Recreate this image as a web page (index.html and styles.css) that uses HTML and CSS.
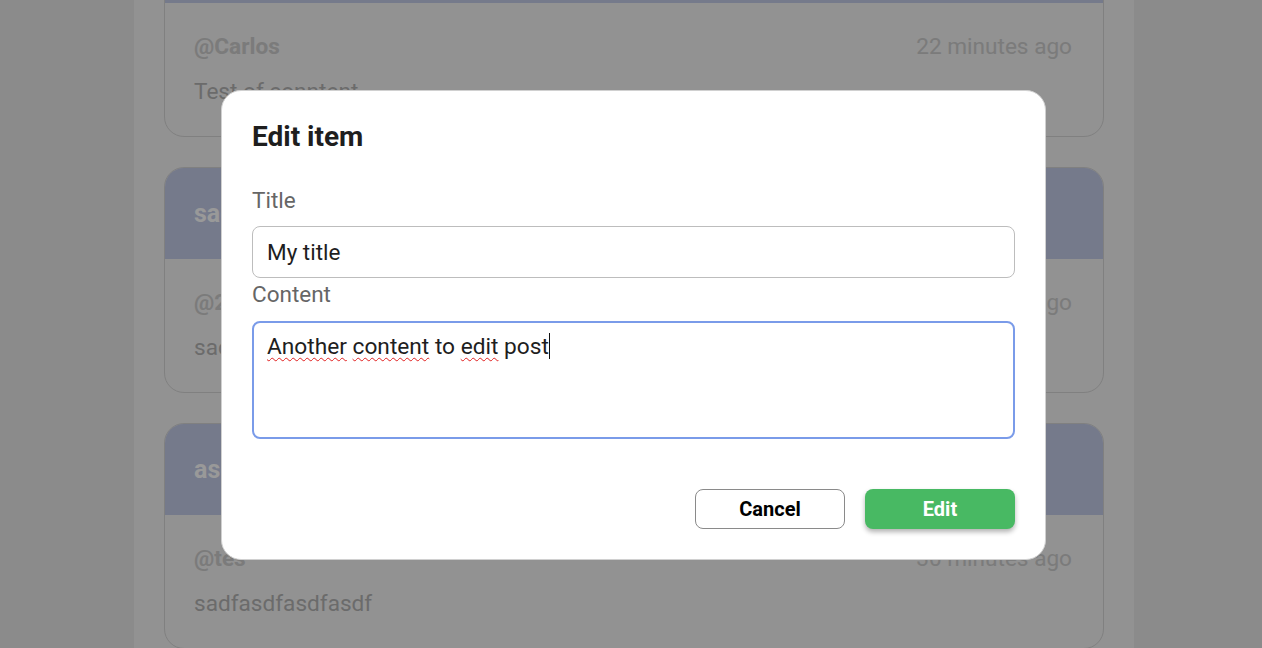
FILE: index.html
```html
<!DOCTYPE html>
<html lang="en">
<head>
<meta charset="utf-8">
<title>Edit item</title>
<link rel="stylesheet" href="styles.css">
</head>
<body>
<main class="column">
  <section class="feed">
    <article class="card">
      <header class="card-head">Test</header>
      <div class="card-body">
        <div class="meta"><span class="user">@Carlos</span><span class="time">22 minutes ago</span></div>
        <p class="text">Test of conntent</p>
      </div>
    </article>
    <article class="card">
      <header class="card-head">sadfasdf</header>
      <div class="card-body">
        <div class="meta"><span class="user">@2sadf</span><span class="time">25 minutes ago</span></div>
        <p class="text">sadfasdf</p>
      </div>
    </article>
    <article class="card">
      <header class="card-head">asdfasdf</header>
      <div class="card-body">
        <div class="meta"><span class="user">@tes</span><span class="time">30 minutes ago</span></div>
        <p class="text">sadfasdfasdfasdf</p>
      </div>
    </article>
  </section>
</main>

<div class="overlay">
  <div class="modal">
    <h2 class="modal-title">Edit item</h2>
    <label class="field-label">Title</label>
    <div class="input">My title</div>
    <label class="field-label field-label-gap">Content</label>
    <div class="textarea"><span class="typo">Another</span> <span class="typo">content</span> to <span class="typo">edit</span> post<span class="caret"></span></div>
    <div class="actions">
      <button class="btn btn-cancel">Cancel</button>
      <button class="btn btn-edit">Edit</button>
    </div>
  </div>
</div>
</body>
</html>
```

FILE: styles.css
```css
* { box-sizing: border-box; }

html, body {
  margin: 0;
  height: 100%;
  overflow: hidden;
}

body {
  background: #e8e8e8;
  font-family: Roboto, "Liberation Sans", Arial, sans-serif;
}

.column {
  width: 1000px;
  margin-left: 134px;
  min-height: 100%;
  background: #f3f3f3;
  padding: 0 30px;
}

.feed {
  display: flex;
  flex-direction: column;
  gap: 30px;
  margin-top: -89px;
}

.card {
  border: 1px solid #d6d6d6;
  border-radius: 20px;
  overflow: hidden;
}

.card-head {
  height: 91px;
  background: #c3cbe8;
  color: #ffffff;
  font-weight: 700;
  font-size: 25px;
  display: flex;
  align-items: center;
  padding-left: 29px;
}

.card-body {
  padding: 30px 31px 30px 29px;
}

.meta {
  display: flex;
  justify-content: space-between;
  font-size: 22.6px;
  line-height: 28px;
}

.user {
  font-weight: 700;
  color: #cdcdcd;
}

.time {
  color: #cdcdcd;
}

.text {
  margin: 17px 0 0;
  font-size: 22.6px;
  line-height: 28px;
  color: #b3b3b3;
}

.overlay {
  position: fixed;
  inset: 0;
  background: rgba(0, 0, 0, 0.4);
  display: flex;
  align-items: center;
  justify-content: center;
  padding-left: 5px;
  padding-top: 2px;
}

.modal {
  width: 825px;
  background: #ffffff;
  border: 1px solid #d0d0d0;
  border-radius: 20px;
  padding: 30px;
  display: flex;
  flex-direction: column;
}

.modal-title {
  margin: 0 0 35px;
  font-size: 28px;
  line-height: 32px;
  font-weight: 700;
  color: #1e1e1e;
}

.field-label {
  font-size: 22.5px;
  line-height: 24px;
  color: #666666;
  margin-bottom: 14px;
}

.field-label-gap {
  margin-top: 4px;
  margin-bottom: 15px;
}

.input {
  height: 52px;
  border: 1px solid #bdbdbd;
  border-radius: 8px;
  padding: 0 14px;
  display: flex;
  align-items: center;
  font-size: 22.5px;
  color: #1e1e1e;
}

.textarea {
  height: 118px;
  border: 2px solid #7a9be9;
  border-radius: 8px;
  padding: 10px 13px;
  font-size: 22.7px;
  line-height: 28px;
  color: #1e1e1e;
}

.typo {
  text-decoration: underline wavy #e02020;
  text-decoration-thickness: 1px;
  text-underline-offset: 3px;
}

.caret {
  display: inline-block;
  width: 1px;
  height: 26px;
  background: #111111;
  vertical-align: -5px;
}

.actions {
  margin-top: 50px;
  display: flex;
  justify-content: flex-end;
  gap: 20px;
}

.btn {
  width: 150px;
  height: 40px;
  border-radius: 8px;
  font-family: Roboto, "Liberation Sans", Arial, sans-serif;
  font-size: 20px;
  font-weight: 700;
}

.btn-cancel {
  background: #ffffff;
  border: 1px solid #8a8a8a;
  color: #000000;
}

.btn-edit {
  background: #48b963;
  border: none;
  color: #ffffff;
  box-shadow: 0 3px 5px rgba(0, 0, 0, 0.3);
}
```
